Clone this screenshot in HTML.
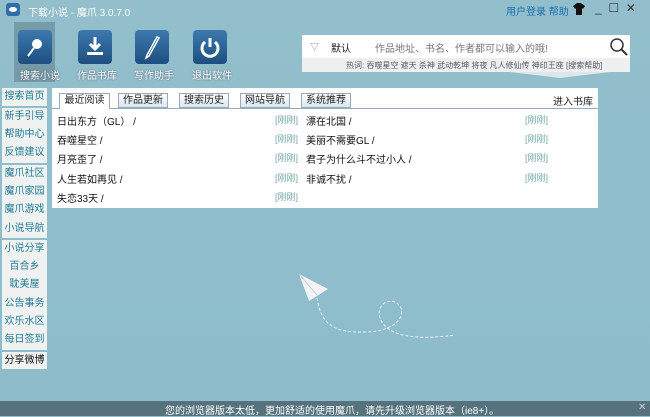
<!DOCTYPE html>
<html><head><meta charset="utf-8"><style>
*{margin:0;padding:0;box-sizing:border-box}
body{width:650px;height:416px;overflow:hidden;background:linear-gradient(#93bfcc,#8dbccb);font-family:"Liberation Sans","Noto Sans CJK SC",sans-serif;font-size:11px;position:relative;color:#222}
.a{position:absolute}
.title{left:28px;top:4px;color:#fff;font-size:10px}
.ico{width:34px;height:34px;border-radius:4px;background:linear-gradient(#3d79ad,#1d4f80);top:30px}
.lbl{top:67px;color:#fff;font-size:10px;text-shadow:0 0 2px #456}
.side{left:2px;width:45px;background:#f0f2f2;color:#1f7a94;font-size:10px;text-align:center}
.side div{height:18.2px;line-height:18px}
.tab{top:93px;height:15px;border:1px solid #9ab;background:linear-gradient(#fff,#d8e6ee);font-size:10px;text-align:center;line-height:13px}
.row{font-size:10px;color:#111}
.rr{font-size:9px;color:#7aa}
</style></head><body>
<div class="a" style="left:6px;top:3px;width:14px;height:13px;border-radius:3px;background:#2f6ea8"></div>
<div class="a" style="left:9px;top:7px;width:8px;height:5px;border-radius:50%;background:#fff"></div>
<div class="a title">下载小说 - 魔爪 3.0.7.0</div>
<div class="a" style="left:506px;top:3px;color:#1d6fb0;font-size:10px">用户登录 帮助</div>
<svg class="a" style="left:572px;top:3px" width="14" height="12"><path d="M1 3L5 0h4l4 3-2 3-1-1v7H4V5L3 6z" fill="#111"/></svg>
<div class="a" style="left:595px;top:1px;font-size:12px;color:#333">_ &nbsp;☐ &nbsp;✕</div>

<div class="a" style="left:14px;top:22px;width:41px;height:60px;background:rgba(70,90,100,.35)"></div>
<div class="a ico" style="left:18px"><svg width="34" height="34"><circle cx="19" cy="14" r="5" fill="#fff"/><line x1="16" y1="18" x2="10" y2="26" stroke="#fff" stroke-width="2"/></svg></div>
<div class="a ico" style="left:78px"><svg width="34" height="34"><path d="M17 7v12M12 14l5 5 5-5" stroke="#fff" stroke-width="3" fill="none"/><rect x="9" y="22" width="16" height="3" fill="#fff"/></svg></div>
<div class="a ico" style="left:135px"><svg width="34" height="34"><path d="M22 7L12 25l-1 3 3-2L24 8z" stroke="#fff" stroke-width="1.5" fill="none"/></svg></div>
<div class="a ico" style="left:193px"><svg width="34" height="34"><path d="M12 12a8 8 0 1 0 10 0" stroke="#fff" stroke-width="3" fill="none"/><line x1="17" y1="8" x2="17" y2="17" stroke="#fff" stroke-width="3"/></svg></div>
<div class="a lbl" style="left:20px">搜索小说</div>
<div class="a lbl" style="left:77px">作品书库</div>
<div class="a lbl" style="left:134px">写作助手</div>
<div class="a lbl" style="left:192px">退出软件</div>

<div class="a" style="left:302px;top:35px;width:328px;height:23px;background:#fff"></div>
<div class="a" style="left:302px;top:58px;width:328px;height:14px;background:#eef0f0"></div>
<div class="a" style="left:510px;top:72px;width:100px;height:6px;background:#dde6ea;clip-path:polygon(0 0,100% 0,50% 100%)"></div>
<div class="a" style="left:310px;top:40px;color:#888;font-size:9px">▽</div>
<div class="a" style="left:331px;top:40px;font-size:10px">默认</div>
<div class="a" style="left:375px;top:40px;font-size:10px;color:#777">作品地址、书名、作者都可以输入的哦!</div>
<svg class="a" style="left:609px;top:37px" width="20" height="20"><circle cx="8" cy="8" r="6" stroke="#333" stroke-width="1.5" fill="none"/><line x1="12" y1="12" x2="18" y2="18" stroke="#333" stroke-width="2"/></svg>
<div class="a" style="left:346px;top:60px;font-size:8px;color:#556">热词: 吞噬星空 遮天 杀神 武动乾坤 将夜 凡人修仙传 神印王座 [搜索帮助]</div>

<div class="a side" style="top:88px;height:18px"><div>搜索首页</div></div>
<div class="a side" style="top:108px;height:55px"><div>新手引导</div><div>帮助中心</div><div>反馈建议</div></div>
<div class="a side" style="top:165px;height:73px"><div>魔爪社区</div><div>魔爪家园</div><div>魔爪游戏</div><div>小说导航</div></div>
<div class="a side" style="top:240px;height:110px"><div>小说分享</div><div>百合乡</div><div>耽美屋</div><div>公告事务</div><div>欢乐水区</div><div>每日签到</div></div>
<div class="a side" style="top:352px;height:17px;color:#111"><div>分享微博</div></div>

<div class="a" style="left:52px;top:88px;width:546px;height:120px;background:#fff"></div>
<div class="a" style="left:52px;top:108px;width:546px;height:1px;background:#9ab"></div>
<div class="a tab" style="left:59px;width:51px;height:16px;background:#fff;border-bottom:none">最近阅读</div>
<div class="a tab" style="left:118px;width:50px">作品更新</div>
<div class="a tab" style="left:179px;width:50px">搜索历史</div>
<div class="a tab" style="left:240px;width:50px">网站导航</div>
<div class="a tab" style="left:301px;width:50px">系统推荐</div>
<div class="a" style="left:553px;top:93px;font-size:10px">进入书库</div>
<div class="a row" style="left:57px;top:113px">日出东方（GL） /</div>
<div class="a row" style="left:57px;top:132px">吞噬星空 /</div>
<div class="a row" style="left:57px;top:151px">月亮歪了 /</div>
<div class="a row" style="left:57px;top:171px">人生若如再见 /</div>
<div class="a row" style="left:57px;top:190px">失恋33天 /</div>
<div class="a rr" style="left:275px;top:113px">[刚刚]</div>
<div class="a rr" style="left:275px;top:132px">[刚刚]</div>
<div class="a rr" style="left:275px;top:151px">[刚刚]</div>
<div class="a rr" style="left:275px;top:171px">[刚刚]</div>
<div class="a rr" style="left:275px;top:190px">[刚刚]</div>
<div class="a row" style="left:306px;top:113px">漂在北国 /</div>
<div class="a row" style="left:306px;top:132px">美丽不需要GL /</div>
<div class="a row" style="left:306px;top:151px">君子为什么斗不过小人 /</div>
<div class="a row" style="left:306px;top:171px">非诚不扰 /</div>
<div class="a rr" style="left:525px;top:113px">[刚刚]</div>
<div class="a rr" style="left:525px;top:132px">[刚刚]</div>
<div class="a rr" style="left:525px;top:151px">[刚刚]</div>
<div class="a rr" style="left:525px;top:171px">[刚刚]</div>

<svg class="a" style="left:295px;top:270px" width="170" height="100"><path d="M4 4L33 19 14 31z" fill="#f2f4f4"/><path d="M4 4L22 25" stroke="#ccd" fill="none"/><path d="M22 28C26 55 40 63 70 62 95 62 110 50 106 38 100 25 80 32 85 48 90 62 110 72 160 65" stroke="#eef" stroke-width="1" stroke-dasharray="3 2" fill="none"/></svg>

<div class="a" style="left:0;top:401px;width:650px;height:15px;background:#56737d"></div>
<div class="a" style="left:165px;top:402px;color:#fff;font-size:10px">您的浏览器版本太低，更加舒适的使用魔爪，请先升级浏览器版本（ie8+）。</div>
<div class="a" style="left:638px;top:402px;color:#ccd;font-size:10px">✕</div>
</body></html>
